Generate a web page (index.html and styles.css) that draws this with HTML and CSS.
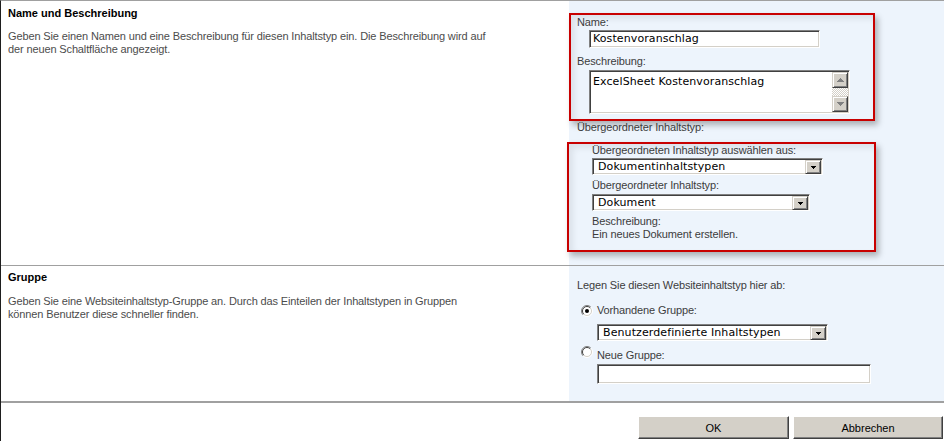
FILE: index.html
```html
<!DOCTYPE html>
<html lang="de">
<head>
    <meta charset="UTF-8">
    <meta name="viewport" content="width=device-width, initial-scale=1.0">
    <link rel="stylesheet" href="styles.css">
    <title>Neuer Websiteinhaltstyp</title>
</head>
<body>
    <div class="page">
        <div class="section section-name">
            <div class="section-info">
                <h3>Name und Beschreibung</h3>
                <p>Geben Sie einen Namen und eine Beschreibung für diesen Inhaltstyp ein. Die Beschreibung wird auf<br>der neuen Schaltfläche angezeigt.</p>
            </div>
            <div class="section-controls">
                <div class="highlight box-name">
                    <div class="label">Name:</div>
                    <div class="textbox name-input">Kostenvoranschlag</div>
                    <div class="label gap-7">Beschreibung:</div>
                    <div class="textarea">
                        <div class="textarea-text">ExcelSheet Kostenvoranschlag</div>
                        <div class="scrollbar">
                            <div class="scroll-btn">
                                <svg width="7" height="4" viewBox="0 0 7 4">
                                    <rect x="3" y="0" width="1" height="1" fill="#808080"/>
                                    <rect x="2" y="1" width="3" height="1" fill="#808080"/>
                                    <rect x="1" y="2" width="5" height="1" fill="#808080"/>
                                    <rect x="0" y="3" width="7" height="1" fill="#808080"/>
                                </svg>
                            </div>
                            <div class="scroll-track"></div>
                            <div class="scroll-btn">
                                <svg width="7" height="4" viewBox="0 0 7 4">
                                    <rect x="0" y="0" width="7" height="1" fill="#808080"/>
                                    <rect x="1" y="1" width="5" height="1" fill="#808080"/>
                                    <rect x="2" y="2" width="3" height="1" fill="#808080"/>
                                    <rect x="3" y="3" width="1" height="1" fill="#808080"/>
                                </svg>
                            </div>
                        </div>
                    </div>
                </div>
                <div class="label outside">Übergeordneter Inhaltstyp:</div>
                <div class="highlight box-parent">
                    <div class="label">Übergeordneten Inhaltstyp auswählen aus:</div>
                    <div class="select select-group">
                        <span class="select-text">Dokumentinhaltstypen</span>
                        <span class="select-btn">
                            <svg width="5" height="3" viewBox="0 0 5 3"><rect x="0" y="0" width="5" height="1"/><rect x="1" y="1" width="3" height="1"/><rect x="2" y="2" width="1" height="1"/></svg>
                        </span>
                    </div>
                    <div class="label gap-4">Übergeordneter Inhaltstyp:</div>
                    <div class="select select-type">
                        <span class="select-text">Dokument</span>
                        <span class="select-btn">
                            <svg width="5" height="3" viewBox="0 0 5 3"><rect x="0" y="0" width="5" height="1"/><rect x="1" y="1" width="3" height="1"/><rect x="2" y="2" width="1" height="1"/></svg>
                        </span>
                    </div>
                    <div class="label gap-4">Beschreibung:</div>
                    <div class="label">Ein neues Dokument erstellen.</div>
                </div>
            </div>
        </div>

        <div class="section section-group">
            <div class="section-info">
                <h3>Gruppe</h3>
                <p>Geben Sie eine Websiteinhaltstyp-Gruppe an. Durch das Einteilen der Inhaltstypen in Gruppen<br>können Benutzer diese schneller finden.</p>
            </div>
            <div class="section-controls group-controls">
                <div class="label">Legen Sie diesen Websiteinhaltstyp hier ab:</div>
                <div class="radio-row first">
                    <svg class="radio" width="12" height="12" viewBox="0 0 12 12">
                        <circle cx="6" cy="6" r="5" fill="#fff"/>
                        <path d="M2.1 9.9 A5.5 5.5 0 0 1 9.9 2.1" fill="none" stroke="#808080"/>
                        <path d="M2.8 9.2 A4.5 4.5 0 0 1 9.2 2.8" fill="none" stroke="#404040"/>
                        <path d="M9.9 2.1 A5.5 5.5 0 0 1 2.1 9.9" fill="none" stroke="#fff"/>
                        <path d="M9.2 2.8 A4.5 4.5 0 0 1 2.8 9.2" fill="none" stroke="#d4d0c8"/>
                        <circle cx="6" cy="6" r="2" fill="#000"/>
                    </svg>
                    <span class="label">Vorhandene Gruppe:</span>
                </div>
                <div class="select select-existing">
                    <span class="select-text">Benutzerdefinierte Inhaltstypen</span>
                    <span class="select-btn">
                        <svg width="5" height="3" viewBox="0 0 5 3"><rect x="0" y="0" width="5" height="1"/><rect x="1" y="1" width="3" height="1"/><rect x="2" y="2" width="1" height="1"/></svg>
                    </span>
                </div>
                <div class="radio-row second">
                    <svg class="radio" width="12" height="12" viewBox="0 0 12 12">
                        <circle cx="6" cy="6" r="5" fill="#fff"/>
                        <path d="M2.1 9.9 A5.5 5.5 0 0 1 9.9 2.1" fill="none" stroke="#808080"/>
                        <path d="M2.8 9.2 A4.5 4.5 0 0 1 9.2 2.8" fill="none" stroke="#404040"/>
                        <path d="M9.9 2.1 A5.5 5.5 0 0 1 2.1 9.9" fill="none" stroke="#fff"/>
                        <path d="M9.2 2.8 A4.5 4.5 0 0 1 2.8 9.2" fill="none" stroke="#d4d0c8"/>
                    </svg>
                    <span class="label">Neue Gruppe:</span>
                </div>
                <div class="textbox new-group"></div>
            </div>
        </div>

        <div class="actions">
            <button class="btn btn-ok">OK</button>
            <button class="btn btn-cancel">Abbrechen</button>
        </div>
    </div>
</body>
</html>
```

FILE: styles.css
```css
body {
    margin: 0;
    font-family: "Liberation Sans", Arial, sans-serif;
    font-size: 11px;
    line-height: 13px;
    letter-spacing: -0.13px;
    color: #4c4c4c;
    background-color: #fff;
}

.page {
    border-left: 1px solid #1e1e1e;
    border-top: 1px solid #a0a0a0;
    min-height: 440px;
}

.section {
    display: grid;
    grid-template-columns: 568px 1fr;
}

.section-name {
    border-bottom: 1px solid #a0a0a0;
}

.section-group {
    border-bottom: 2px solid #a0a0a0;
}

.section-info {
    padding: 6px 7px 0;
}

.section-group .section-info {
    padding-top: 5px;
}

.section-info h3 {
    margin: 0;
    font-size: 11px;
    font-weight: bold;
    letter-spacing: 0;
    color: #000;
}

.section-info p {
    margin: 10px 0 0;
}

.section-group .section-info p {
    margin-top: 11px;
}

.section-controls {
    background-color: #edf4fc;
    padding: 12px 0 13px;
}

.label {
    color: #3c3c3c;
}

.gap-4 {
    margin-top: 4px;
}

.gap-7 {
    margin-top: 7px;
}

.outside {
    margin-left: 8px;
}

.highlight {
    border: 2px solid #c80000;
    box-sizing: border-box;
    box-shadow: 3px 4px 6px rgba(0, 0, 0, 0.28), inset 4px 4px 6px rgba(0, 0, 0, 0.08);
}

.box-name {
    width: 306px;
    padding: 1px 0 5px 6px;
}

.box-parent {
    width: 309px;
    margin: 8px 0 0 -2px;
    padding: 0 0 9px 23px;
}

/* classic sunken field */
.textbox,
.textarea,
.select {
    box-sizing: border-box;
    background-color: #fff;
    border: 1px solid;
    border-color: #808080 #fff #fff #808080;
    box-shadow: inset 1px 1px #404040, inset -1px -1px #d4d0c8;
    font-family: "DejaVu Sans", Verdana, sans-serif;
    font-size: 11px;
    letter-spacing: 0.1px;
    color: #000;
}

.textbox {
    height: 18px;
    line-height: 14px;
    padding: 1px 3px;
}

.name-input {
    width: 231px;
    margin: 1px 0 0 12px;
}

.new-group {
    width: 274px;
    height: 20px;
    margin: 2px 0 0 20px;
}

.textarea {
    display: flex;
    width: 261px;
    height: 44px;
    margin: 2px 0 0 12px;
    padding: 1px;
}

.textarea-text {
    flex: 1;
    padding: 3px 2px;
    line-height: 14px;
}

.scrollbar {
    display: flex;
    flex-direction: column;
    width: 16px;
}

.scroll-btn {
    box-sizing: border-box;
    height: 16px;
    background-color: #d4d0c8;
    border: 1px solid;
    border-color: #d4d0c8 #404040 #404040 #d4d0c8;
    box-shadow: inset 1px 1px #fff, inset -1px -1px #808080;
    display: flex;
    align-items: center;
    justify-content: center;
}

.scroll-track {
    flex: 1;
    background: repeating-conic-gradient(#d4d0c8 0 25%, #fff 0 50%) 0 0 / 2px 2px;
}

.select {
    display: flex;
    height: 17px;
    padding: 1px 1px 0 0;
    margin-top: 1px;
}

.select-text {
    flex: 1;
    padding-left: 5px;
    line-height: 14px;
}

.select-btn {
    box-sizing: border-box;
    width: 16px;
    height: 14px;
    background-color: #d4d0c8;
    border: 1px solid;
    border-color: #d4d0c8 #404040 #404040 #d4d0c8;
    box-shadow: inset 1px 1px #fff, inset -1px -1px #808080;
    display: flex;
    align-items: center;
    justify-content: center;
}

.select-group {
    width: 231px;
}

.select-type {
    width: 218px;
    margin-top: 2px;
}

.group-controls {
    padding: 13px 0 17px 8px;
}

.radio-row {
    display: flex;
    align-items: flex-start;
    gap: 4px;
}

.radio-row.first {
    margin-top: 12px;
}

.radio-row.second {
    margin-top: 8px;
}

.radio {
    margin-left: 4px;
}

.radio-row.first .radio {
    margin-top: 1px;
}

.radio-row.second .radio {
    margin-top: -3px;
}

.select-existing {
    width: 231px;
    margin: 7px 0 0 20px;
}

.actions {
    display: flex;
    justify-content: flex-end;
    gap: 4px;
    padding: 13px 1px 0 0;
}

.btn {
    height: 23px;
    background-color: #d4d0c8;
    border: 1px solid;
    border-color: #fff #404040 #404040 #fff;
    box-shadow: inset -1px -1px #808080;
    font-family: "Liberation Sans", Arial, sans-serif;
    font-size: 11px;
    color: #000;
    padding: 0;
}

.btn-ok {
    width: 151px;
}

.btn-cancel {
    width: 150px;
}
```
